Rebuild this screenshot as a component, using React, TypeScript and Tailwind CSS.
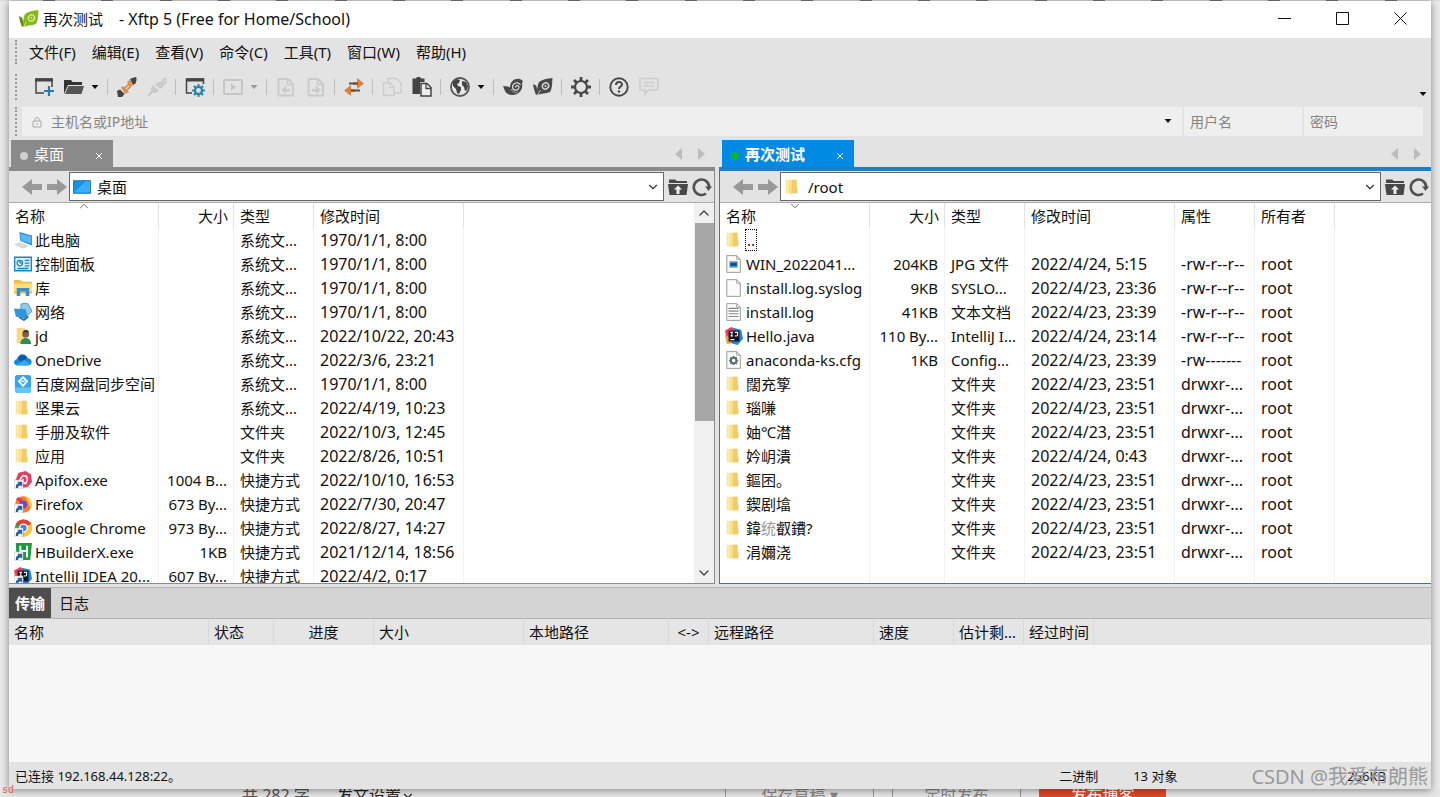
import type { ReactNode } from 'react'
import { ChevronDown, ChevronUp } from 'lucide-react'
import { clsx } from 'clsx'

interface FileRow {
  icon: ReactNode
  name: ReactNode
  cells: string[]
}

interface Column {
  label: string
  width: string
  align?: 'right' | 'center'
}

/* ---------- toolbar icons, 20x20 ---------- */

function Svg({ children, className = 'size-5' }: { children: ReactNode; className?: string }) {
  return (
    <svg viewBox="0 0 20 20" className={clsx('block shrink-0', className)} fill="none" aria-hidden="true">
      {children}
    </svg>
  )
}

const NewSessionIcon = () => (
  <Svg>
    <path d="M10 16H2V2h16v8" stroke="#444" strokeWidth="1.5" />
    <path d="M1 1.500h18v3H1z" fill="#444" />
    <path d="M15 9v10M10 14h10" stroke="#1f7fa8" strokeWidth="2.200" />
  </Svg>
)

const OpenIcon = () => (
  <Svg>
    <path d="M0 17V3h7l1.500 2H18v3H4z" fill="#333" />
    <path d="M4.500 9H20L17.500 17H1z" fill="#555" />
  </Svg>
)

const PlugIcon = () => (
  <Svg>
    <path d="M13 2c2-1 4-1.500 6-2 1 2 .5 4-.5 6.500L16 8z" fill="#444" />
    <path d="M12.500 2.500l4 5.500-3 2.500-1.500-1-1-2.500-1-1.500z" fill="#e09350" />
    <path d="M0 14l3-1.500 4.500 4.500L5 20H1z" fill="#444" />
    <path d="M4 10.500l2-1.500 6 6-4 2z" fill="#e09350" />
    <path d="M7 12l5-5M9 14l4-4" stroke="#c98245" strokeWidth="1.500" />
  </Svg>
)

const UnplugIcon = () => (
  <Svg>
    <path d="M12 5l3-1 2 2-1 4-3 2-5-5zM6 8l6 6-3 2-3 0-2-2 0-3z" fill="#cacaca" />
    <path d="M14 6l5-5M16 8l4-4M1 19l5-5" stroke="#cacaca" strokeWidth="2" />
  </Svg>
)

const gearTeeth = 'M10 1v3M10 16v3M1 10h3M16 10h3M3.600 3.600l2.200 2.200M14.200 14.200l2.200 2.200M3.600 16.400l2.200-2.200M14.200 5.800l2.200-2.200'

const PropsIcon = () => (
  <Svg>
    <path d="M7 16H1.500V2h17v5" stroke="#444" strokeWidth="1.500" />
    <path d="M1 1.500h18v3H1z" fill="#444" />
    <g transform="translate(6.500 6.500) scale(.7)">
      <circle cx="10" cy="10" r="5" stroke="#1f7fa8" strokeWidth="3" />
      <path d={gearTeeth} stroke="#1f7fa8" strokeWidth="3" />
    </g>
  </Svg>
)

const PlayIcon = () => (
  <Svg>
    <rect x="1" y="3" width="18" height="14" rx="1" stroke="#c6c6c6" strokeWidth="2" />
    <path d="M8 6.500v7l5-3.500z" fill="#c6c6c6" />
  </Svg>
)

const DocIcon = ({ flip }: { flip?: boolean }) => (
  <Svg>
    <path d="M2.500 2H12l5 5v11.500H2.500z" stroke="#cbcbcb" strokeWidth="2" />
    <path d="M11.500 2v5.500H17" stroke="#cbcbcb" strokeWidth="1.500" />
    <path d={flip ? 'M6 12h4v-3.500l5 4.500-5 4v-2.500H6z' : 'M14 12h-4v-3.500L5 13l5 4v-2.500h4z'} fill="#cbcbcb" />
  </Svg>
)

const TransferIcon = () => (
  <Svg>
    <path d="M13 1l7 5.500-7 5.500V8H9V5h4z" fill="#d9823e" />
    <path d="M7 8l-7 5.500L7 19v-4h4v-3H7z" fill="#d9823e" />
    <path d="M5 6.500h9M7 13.500h9" stroke="#555" strokeWidth="1.800" />
  </Svg>
)

const CopyIcon = () => (
  <Svg>
    <path d="M6 6V1.500h8l5 4V16h-6M1.500 6H8l4 4v8.500H1.500z" stroke="#cdcdcd" strokeWidth="1.500" />
    <path d="M7.500 6v4.500H12" stroke="#cdcdcd" />
  </Svg>
)

const PasteIcon = () => (
  <Svg>
    <path d="M.5 1.500H4L5 0h3l1 1.500h3.500V5H8v12H.5z" fill="#444" />
    <path d="M9 6.500h6l4 4V19H9z" fill="#eee" stroke="#444" strokeWidth="1.500" />
    <path d="M14 6.500v5h5" stroke="#444" strokeWidth="1.300" />
  </Svg>
)

const GlobeIcon = () => (
  <Svg>
    <circle cx="10" cy="10" r="9" fill="#e8e8e8" stroke="#555" strokeWidth="1.800" />
    <path d="M3 5l4-3 3 1-1 3-2 1 1 2 3 1v3l-2 4-2-1-1-4-3-3zM12 4l4 1 2 4-1 4-2 1-1-4-2-2z" fill="#444" />
  </Svg>
)

const ShellIcon = () => (
  <Svg>
    <path d="M0 9l5 .5 2 1C7 4 12 1 17 2l3 2-1 2c1 5-1 9-5 11-5 2-10 1-12-3z" fill="#484848" />
    <path d="M17.500 8c-2-4-8-2-8 2 0 4 6 4 6.500.5 0-2.500-3.500-2.500-3.500 0" stroke="#ddd" strokeWidth="1.200" />
    <path d="M8 12c1 3 4 4 7 3" stroke="#bbb" strokeWidth=".8" />
  </Svg>
)

const LeafIcon = ({ fill, side, light }: { fill: string; side: string; light: string }) => (
  <Svg>
    <path d="M0 7l3 1.500 2.500 8L3 18C1.500 14 .5 11 0 7z" fill={side} />
    <path d="M6 5c3-2.500 8-3.500 13.500-4C19 6 19.500 11 17 15c-4 2-9 1-12.500 3C4 13 4 9 6 5z" fill={fill} />
    <path d="M4.500 18l3-5" stroke={light} strokeWidth=".8" />
    <ellipse cx="12.500" cy="9" rx="3.300" ry="2.900" stroke={light} strokeWidth="1.400" transform="rotate(-35 12.500 9)" />
    <circle cx="12.500" cy="9" r="1" fill={light} />
  </Svg>
)

const GearIcon = () => (
  <Svg>
    <circle cx="10" cy="10" r="6" stroke="#484848" strokeWidth="2.200" />
    <path d="M10 0v4M10 16v4M0 10h4M16 10h4M3 3l2.800 2.800M14.200 14.200L17 17M3 17l2.800-2.800M14.200 5.800L17 3" stroke="#484848" strokeWidth="2.800" />
  </Svg>
)

const HelpIcon = () => (
  <Svg>
    <circle cx="10" cy="10" r="8.700" stroke="#484848" strokeWidth="1.900" />
    <path d="M7 8c0-4 6-4 6-.5 0 2-3 2-3 4.500" stroke="#484848" strokeWidth="2" />
    <circle cx="10" cy="14.500" r="1.200" fill="#484848" />
  </Svg>
)

const CommentIcon = () => (
  <Svg>
    <path d="M1 1.500h18v11.500H9.500L6 17v-4H1z" stroke="#cdcdcd" strokeWidth="1.600" />
    <path d="M4.500 5.500h11M4.500 9h11" stroke="#cdcdcd" strokeWidth="1.400" />
  </Svg>
)

const Caret = ({ muted }: { muted?: boolean }) => (
  <svg viewBox="0 0 8 5" className="block h-[5px] w-2 shrink-0" aria-hidden="true">
    <path d="M.5 0h7L4 4z" fill={muted ? '#999' : '#111'} />
  </svg>
)

/* ---------- file icons, 18px ---------- */

const icon = 'h-[18px] w-[18px]'

const Folder = () => (
  <Svg className={icon}>
    <path d="M2 2h12v15H2z" fill="#fbe08b" />
    <path d="M9 2h5v8l1 1v6H8l1-7z" fill="#f2cb66" />
    <path d="M4 2v15" stroke="#fdeeb8" strokeWidth="2" />
  </Svg>
)

const PcIcon = () => (
  <Svg className={icon}>
    <path d="M6 1l14 4v11L7 11z" fill="#2f8fd8" />
    <path d="M7 3l12 3v8L8 10.500z" fill="#58b8f3" />
    <path d="M1 15l6-2 8 4-5 2z" fill="#dcdcdc" stroke="#bbb" strokeWidth=".6" />
  </Svg>
)

const PanelIcon = () => (
  <Svg className={icon}>
    <path d="M.7 2.500h18.600v15H.7z" fill="#d5efff" stroke="#2081c2" strokeWidth="1.600" />
    <circle cx="6.500" cy="9" r="3" fill="#fff" stroke="#2081c2" strokeWidth="1.300" />
    <path d="M6.500 9V6M6.500 9h3M12 6h5M12 9h5M12 12h5M4 15h12" stroke="#2081c2" strokeWidth="1.500" />
  </Svg>
)

const LibIcon = () => (
  <Svg className={icon}>
    <path d="M0 1h7l2 2h11v13H0z" fill="#f0bd48" />
    <path d="M0 5h20v9H0z" fill="#ffdf7c" />
    <path d="M3 10h14v9h-4v-5H7v5H3z" fill="#3c8fce" />
  </Svg>
)

const NetIcon = () => (
  <Svg className={icon}>
    <path d="M8 1l7-1 5 9-6 6-7-3z" fill="#8fcbe8" stroke="#4992bb" />
    <path d="M0 6l13 1 2 8-2 3L2 15z" fill="#2e97dc" />
    <path d="M6 16l5 3 5-4" stroke="#286e9f" strokeWidth="1.800" />
  </Svg>
)

const UserIcon = () => (
  <Svg className={icon}>
    <path d="M3 1h9v17H3z" fill="#f8d97c" />
    <circle cx="13" cy="8" r="3.800" fill="#8b5c3c" />
    <path d="M7 19c0-9 12-9 12 0z" fill="#2f8c5d" />
    <path d="M9.500 6c1-4 7-4 7 0z" fill="#393b3a" />
  </Svg>
)

const CloudIcon = () => (
  <Svg className={icon}>
    <path d="M4 16c-5 0-5-6-.5-7C5 2 13 2 15 8c6 0 6 8 1 8z" fill="#1289db" />
    <path d="M4 9c2-6 9-6 11-1l-7 4z" fill="#0b5cad" />
    <path d="M2.500 15l9-5 7 5c-1 1-14 1-16 0z" fill="#31a9ee" />
  </Svg>
)

const SyncIcon = () => (
  <Svg className={icon}>
    <rect x="1" y="0" width="18" height="20" rx="3" fill="#35a5e6" />
    <path d="M1 14h18v3c0 2-1 3-3 3H4c-2 0-3-1-3-3z" fill="#64c4f5" />
    <path d="M10 2.500l4.500 4.500-4.500 5L5.500 7z" stroke="#fff" strokeWidth="2" />
    <path d="M8 7h4" stroke="#fff" strokeWidth="1.500" />
  </Svg>
)

const Shortcut = () => (
  <>
    <path d="M0 10h10v10H0z" fill="#fff" stroke="#aaa" strokeWidth=".6" />
    <path d="M2 19c0-4 1-5 3-5.500L3.500 12H9v5.500L7.500 16C5 16 4.500 17 4.500 19z" fill="#1f5fae" />
  </>
)

const ApifoxIcon = () => (
  <Svg className={icon}>
    <path d="M5 2l8-2 6 4 1 8-5 6-8 1-6-7z" fill="#e2405f" />
    <path d="M7 12V9l3-4 4 1 1 4-2 4-3-1V9" stroke="#fff" strokeWidth="1.700" />
    <Shortcut />
  </Svg>
)

const FirefoxIcon = () => (
  <Svg className={icon}>
    <circle cx="10.500" cy="10.500" r="9.200" fill="#ff7a2b" />
    <path d="M12 1c7 2 9 8 7 13-2-1-2-4-3-6z" fill="#ffd13b" />
    <path d="M2 5l3-3 1 2 4 0-3 4z" fill="#e8364b" />
    <circle cx="10" cy="10.500" r="4.500" fill="#7045c9" />
    <Shortcut />
  </Svg>
)

const ChromeIcon = () => (
  <Svg className={icon}>
    <circle cx="10.500" cy="10" r="9.500" fill="#2fa552" />
    <path d="M10.500 10L2.300 5.200A9.500 9.500 0 0 1 18.700 5.200z" fill="#e14234" />
    <path d="M10.500 10l8.200-4.800A9.500 9.500 0 0 1 10.500 19.500z" fill="#fbc92f" />
    <path d="M3 5h16" stroke="#e14234" strokeWidth="2" />
    <circle cx="10.500" cy="10" r="4.300" fill="#3f82ee" stroke="#fff" strokeWidth="1.500" />
    <Shortcut />
  </Svg>
)

const HBuilderIcon = () => (
  <Svg className={icon}>
    <path d="M2 0h18l-2 19H3z" fill="#1b9b42" />
    <path d="M7 3v13M14.500 3v13M7 9h7.500" stroke="#fff" strokeWidth="2.200" />
    <Shortcut />
  </Svg>
)

const IdeaIcon = ({ link }: { link?: boolean }) => (
  <Svg className={icon}>
    <path d="M0 4l7-4 6 3-1 14-9 1z" fill="#e8405c" />
    <path d="M10 1l8 2 2 10-6 7-7-2z" fill="#1b84e8" />
    <path d="M0 9l5 2 2 7-5 1z" fill="#f49d3c" />
    <path d="M4 4h12v12H4z" fill="#18121c" />
    <path d="M6 6h3M7.500 6v4M6 10h3M11 6h3v3c0 1-2 1.500-3 .5M6 14h4.500" stroke="#fff" strokeWidth="1.200" />
    {link && <Shortcut />}
  </Svg>
)

const Page = ({ children }: { children?: ReactNode }) => (
  <Svg className={icon}>
    <path d="M2 .7h11l4 4v14.600H2z" fill="#fbfbfb" stroke="#999" strokeWidth="1.100" />
    <path d="M13 .7v4h4" stroke="#999" />
    {children}
  </Svg>
)

/* ---------- data ---------- */

const localColumns: Column[] = [
  { label: '名称', width: 'w-[150px]' },
  { label: '大小', width: 'w-[75px]', align: 'right' },
  { label: '类型', width: 'w-20' },
  { label: '修改时间', width: 'w-[150px]' },
]

const remoteColumns: Column[] = [
  ...localColumns,
  { label: '属性', width: 'w-20' },
  { label: '所有者', width: 'w-20' },
]

const localRows: FileRow[] = [
  { icon: <PcIcon />, name: '此电脑', cells: ['', '系统文...', '1970/1/1, 8:00'] },
  { icon: <PanelIcon />, name: '控制面板', cells: ['', '系统文...', '1970/1/1, 8:00'] },
  { icon: <LibIcon />, name: '库', cells: ['', '系统文...', '1970/1/1, 8:00'] },
  { icon: <NetIcon />, name: '网络', cells: ['', '系统文...', '1970/1/1, 8:00'] },
  { icon: <UserIcon />, name: 'jd', cells: ['', '系统文...', '2022/10/22, 20:43'] },
  { icon: <CloudIcon />, name: 'OneDrive', cells: ['', '系统文...', '2022/3/6, 23:21'] },
  { icon: <SyncIcon />, name: '百度网盘同步空间', cells: ['', '系统文...', '1970/1/1, 8:00'] },
  { icon: <Folder />, name: '坚果云', cells: ['', '系统文...', '2022/4/19, 10:23'] },
  { icon: <Folder />, name: '手册及软件', cells: ['', '文件夹', '2022/10/3, 12:45'] },
  { icon: <Folder />, name: '应用', cells: ['', '文件夹', '2022/8/26, 10:51'] },
  { icon: <ApifoxIcon />, name: 'Apifox.exe', cells: ['1004 B...', '快捷方式', '2022/10/10, 16:53'] },
  { icon: <FirefoxIcon />, name: 'Firefox', cells: ['673 By...', '快捷方式', '2022/7/30, 20:47'] },
  { icon: <ChromeIcon />, name: 'Google Chrome', cells: ['973 By...', '快捷方式', '2022/8/27, 14:27'] },
  { icon: <HBuilderIcon />, name: 'HBuilderX.exe', cells: ['1KB', '快捷方式', '2021/12/14, 18:56'] },
  { icon: <IdeaIcon link />, name: 'IntelliJ IDEA 20...', cells: ['607 By...', '快捷方式', '2022/4/2, 0:17'] },
]

const dir = (name: ReactNode, date = '2022/4/23, 23:51'): FileRow => ({
  icon: <Folder />,
  name,
  cells: ['', '文件夹', date, 'drwxr-...', 'root'],
})

const remoteRows: FileRow[] = [
  {
    icon: <Folder />,
    name: <span className="-ml-px block h-[22px] w-3 border border-dotted border-black text-center leading-5">..</span>,
    cells: ['', '', '', '', ''],
  },
  {
    icon: (
      <Page>
        <path d="M5 7h9v7H5z" fill="#3f8fd2" />
        <path d="M6 9h7v3H6z" fill="#15487f" />
      </Page>
    ),
    name: 'WIN_2022041...',
    cells: ['204KB', 'JPG 文件', '2022/4/24, 5:15', '-rw-r--r--', 'root'],
  },
  { icon: <Page />, name: 'install.log.syslog', cells: ['9KB', 'SYSLO...', '2022/4/23, 23:36', '-rw-r--r--', 'root'] },
  {
    icon: <Page><path d="M4 6h11M4 9h11M4 12h11M4 15h11" stroke="#888" strokeWidth="1.200" /></Page>,
    name: 'install.log',
    cells: ['41KB', '文本文档', '2022/4/23, 23:39', '-rw-r--r--', 'root'],
  },
  { icon: <IdeaIcon />, name: 'Hello.java', cells: ['110 By...', 'IntelliJ I...', '2022/4/24, 23:14', '-rw-r--r--', 'root'] },
  {
    icon: (
      <Page>
        <g transform="translate(4 5) scale(.56)">
          <circle cx="10" cy="10" r="5.500" stroke="#5f6d75" strokeWidth="4" />
          <path d={gearTeeth} stroke="#5f6d75" strokeWidth="3.500" />
        </g>
      </Page>
    ),
    name: 'anaconda-ks.cfg',
    cells: ['1KB', 'Config...', '2022/4/23, 23:39', '-rw-------', 'root'],
  },
  dir('闊充箰'),
  dir('瑙嗛'),
  dir('妯℃澘'),
  dir('妗岄潰', '2022/4/24, 0:43'),
  dir('鏂囨。'),
  dir('鍥剧墖'),
  dir(<>鍏<span className="text-[#999]">统</span>叡鐨?</>),
  dir('涓嬭浇'),
]

const queueColumns: Column[] = [
  { label: '名称', width: 'w-[200px]' },
  { label: '状态', width: 'w-[65px]' },
  { label: '进度', width: 'w-[100px]', align: 'center' },
  { label: '大小', width: 'w-[150px]' },
  { label: '本地路径', width: 'w-[145px]' },
  { label: '<->', width: 'w-10', align: 'center' },
  { label: '远程路径', width: 'w-[165px]' },
  { label: '速度', width: 'w-20' },
  { label: '估计剩...', width: 'w-[70px]' },
  { label: '经过时间', width: 'w-[70px]' },
]

/* ---------- parts ---------- */

const Grip = () => <div className="w-0.5 shrink-0 self-stretch border-l-2 border-dotted border-[#999]" />
const Sep = () => <div className="mr-[9px] ml-2 h-4 w-px shrink-0 bg-[#bdbdbd]" />

function Tool({ label, children, disabled }: { label: string; children: ReactNode; disabled?: boolean }) {
  return (
    <button type="button" aria-label={label} disabled={disabled} className="flex shrink-0 items-center gap-[7px]">
      {children}
    </button>
  )
}

function Toolbar() {
  return (
    <div className="flex h-[34px] items-center py-1 pr-1 pl-1.5">
      <Grip />
      <div className="ml-[17px] flex items-center gap-2.5">
        <Tool label="新建"><NewSessionIcon /></Tool>
        <Tool label="打开"><OpenIcon /><Caret /></Tool>
      </div>
      <Sep />
      <div className="flex items-center gap-2.5">
        <Tool label="连接"><PlugIcon /></Tool>
        <Tool label="断开" disabled><UnplugIcon /></Tool>
      </div>
      <Sep />
      <Tool label="属性"><PropsIcon /></Tool>
      <Sep />
      <Tool label="启动" disabled><PlayIcon /><Caret muted /></Tool>
      <Sep />
      <div className="flex items-center gap-2.5">
        <Tool label="下载" disabled><DocIcon /></Tool>
        <Tool label="上传" disabled><DocIcon flip /></Tool>
      </div>
      <Sep />
      <Tool label="传输"><TransferIcon /></Tool>
      <Sep />
      <div className="flex items-center gap-2.5">
        <Tool label="复制" disabled><CopyIcon /></Tool>
        <Tool label="粘贴"><PasteIcon /></Tool>
      </div>
      <Sep />
      <Tool label="编码"><GlobeIcon /><Caret /></Tool>
      <Sep />
      <div className="flex items-center gap-2.5">
        <Tool label="Xshell"><ShellIcon /></Tool>
        <Tool label="Xftp"><LeafIcon fill="#484848" side="#484848" light="#ddd" /></Tool>
      </div>
      <Sep />
      <Tool label="选项"><GearIcon /></Tool>
      <Sep />
      <div className="flex items-center gap-2.5">
        <Tool label="帮助"><HelpIcon /></Tool>
        <Tool label="反馈" disabled><CommentIcon /></Tool>
      </div>
      <button type="button" aria-label="更多" className="mt-3.5 ml-auto"><Caret /></button>
    </div>
  )
}

const field = 'min-w-0 bg-[#efefef] text-sm leading-5 outline-none placeholder:text-[#858585]'

function AddressBar() {
  return (
    <div className="mt-[3px] flex h-[29px] pr-2 pl-1.5">
      <Grip />
      <div className="ml-[5px] flex flex-1 items-center bg-[#efefef] pr-2.5 pl-2.5">
        <svg viewBox="0 0 10 12" className="mr-[9px] h-3 w-2.5" fill="none" stroke="#aaa" aria-hidden="true">
          <path d="M1 5h8v6H1zM3 5V3c0-2 4-2 4 0v2M5 7v2" />
        </svg>
        <input aria-label="主机" placeholder="主机名或IP地址" className={clsx(field, 'flex-1')} />
        <Caret />
      </div>
      <input aria-label="用户名" placeholder="用户名" className={clsx(field, 'ml-0.5 w-[118px] px-1.5')} />
      <input aria-label="密码" placeholder="密码" type="password" className={clsx(field, 'ml-0.5 w-[119px] px-1.5')} />
    </div>
  )
}

function NavArrow({ flip }: { flip?: boolean }) {
  return (
    <svg viewBox="0 0 20 16" className={clsx('block h-4 w-5', flip && 'rotate-180')} aria-hidden="true">
      <path d="M0 8l10-8v5h10v6H10v5z" fill="#989898" />
    </svg>
  )
}

function PathBar({ path, pathIcon }: { path: string; pathIcon: ReactNode }) {
  return (
    <div className="flex h-8 shrink-0 items-center border-b border-[#aaa] bg-[#e3e3e3] pr-0.5">
      <button type="button" aria-label="后退" className="ml-[13px]"><NavArrow /></button>
      <button type="button" aria-label="前进" className="ml-[5px]"><NavArrow flip /></button>
      <div className="ml-0.5 flex h-[29px] flex-1 items-center border border-[#666] bg-white pr-[3px] pl-[3px]">
        {pathIcon}
        <select aria-label="路径" className="ml-1.5 min-w-0 flex-1 appearance-none bg-white outline-none">
          <option>{path}</option>
        </select>
        <ChevronDown className="size-3.5 text-[#333]" strokeWidth={2} />
      </div>
      <button type="button" aria-label="上一级" className="ml-1">
        <Svg>
          <path d="M1 2.500h6l2 1.500h10v2H1z" fill="#484848" />
          <path d="M0 7h20L18.500 18h-17z" fill="#484848" />
          <path d="M10 8.500l4 4h-2.500V17h-3v-4.500H6z" fill="#eee" />
        </Svg>
      </button>
      <button type="button" aria-label="刷新" className="ml-1">
        <Svg>
          <path d="M14 16.500A7.700 7.700 0 1 1 17.200 10" stroke="#505050" strokeWidth="2.600" />
          <path d="M13 9.500h7l-3.500 4.500z" fill="#505050" />
        </Svg>
      </button>
    </div>
  )
}

function FileTable({ columns, rows, sort }: { columns: Column[]; rows: FileRow[]; sort: 'up' | 'down' }) {
  const Arrow = sort === 'up' ? ChevronUp : ChevronDown
  return (
    <div className="min-w-0 flex-1 overflow-hidden">
      <table className="h-full w-full table-fixed border-separate border-spacing-0">
        <colgroup>
          {columns.map((c) => <col key={c.label} className={c.width} />)}
          <col />
        </colgroup>
        <thead>
          <tr className="h-[25px]">
            {columns.map((c, i) => (
              <th
                key={c.label}
                className={clsx('relative border-r border-[#e2e2e2] py-0 font-normal leading-6', c.align === 'right' ? 'pr-[5px] text-right' : 'pl-1.5 text-left')}
              >
                {c.label}
                {i === 0 && <Arrow className="absolute -top-1 left-1/2 size-3.5 -translate-x-1/2 text-[#555]" strokeWidth={1.5} />}
              </th>
            ))}
            <th />
          </tr>
        </thead>
        <tbody>
          {rows.map((row, i) => (
            <tr key={i} className="h-6">
              <td className="overflow-hidden border-r border-[#f3f3f3] py-0 pl-[5px]">
                <div className="flex h-6 items-center gap-[3px] whitespace-nowrap leading-6">
                  {row.icon}
                  <span>{row.name}</span>
                </div>
              </td>
              {row.cells.map((cell, j) => (
                <td
                  key={j}
                  className={clsx(
                    'overflow-hidden whitespace-nowrap border-r border-[#f3f3f3] p-0 leading-6',
                    j === 0 ? 'pr-1.5 text-right' : 'pl-1.5',
                    j > 1 && 'text-base leading-6',
                  )}
                >
                  {cell}
                </td>
              ))}
              <td />
            </tr>
          ))}
          {/* filler row keeps the column rules running to the bottom */}
          <tr>
            {columns.map((c) => <td key={c.label} className="border-r border-[#f3f3f3] p-0" />)}
            <td className="p-0" />
          </tr>
        </tbody>
      </table>
    </div>
  )
}

function Scrollbar() {
  return (
    <div className="flex w-5 shrink-0 flex-col items-center bg-[#f0f0f0]">
      <ChevronUp className="my-0.5 size-4 text-[#444]" strokeWidth={2} />
      <div className="min-h-0 w-[19px] flex-[198] bg-[#a7a7a7]" />
      <div className="min-h-0 flex-[142]" />
      <ChevronDown className="my-0.5 size-4 text-[#444]" strokeWidth={2} />
    </div>
  )
}

interface PaneProps {
  title: string
  active?: boolean
  path: string
  pathIcon: ReactNode
  children: ReactNode
}

function Pane({ title, active, path, pathIcon, children }: PaneProps) {
  return (
    <section className="flex min-h-0 min-w-0 flex-col">
      <div className={clsx('flex h-[31px] shrink-0 items-stretch border-b-4 pl-0.5', active ? 'border-[#1883cc]' : 'border-[#8a8a8a]')}>
        <div className={clsx('flex items-center pl-[9px] text-white', active ? 'ml-px w-[132px] bg-[#008ae6]' : 'w-[102px] bg-[#8a8a8a]')}>
          <span className={clsx('mt-1 size-2 rounded-full', active ? 'bg-[#09b43a]' : 'bg-[#cfcfcf]')} />
          <span className={clsx('ml-1.5', active && 'font-bold')}>{title}</span>
          <button type="button" aria-label="关闭标签" className="mr-2.5 ml-auto pt-1">
            <svg viewBox="0 0 8 8" className="size-2" stroke="#fff" aria-hidden="true"><path d="M1 1l6 6M7 1L1 7" /></svg>
          </button>
        </div>
        <div className="mr-2.5 ml-auto flex items-center gap-3.5">
          <svg viewBox="0 0 8 12" className="h-3 w-2" aria-hidden="true"><path d="M7 0v12L0 6z" fill="#bdbdbd" /></svg>
          <svg viewBox="0 0 8 12" className="h-3 w-2" aria-hidden="true"><path d="M1 0v12l7-6z" fill="#bdbdbd" /></svg>
        </div>
      </div>
      <div className={clsx('flex min-h-0 flex-1 flex-col border-b', active ? 'border-l border-[#1883cc]' : 'border-r border-[#8a8a8a]')}>
        <PathBar path={path} pathIcon={pathIcon} />
        <div className="flex min-h-0 flex-1 overflow-hidden bg-white">{children}</div>
      </div>
    </section>
  )
}

const DesktopIcon = () => (
  <Svg className={icon}>
    <path d="M.5 3h19v14H.5z" fill="#1692e8" stroke="#176da9" />
    <path d="M1 16L14 3.500h5v12.500z" fill="#39aef5" />
  </Svg>
)

const menus = ['文件(F)', '编辑(E)', '查看(V)', '命令(C)', '工具(T)', '窗口(W)', '帮助(H)']

export default function App() {
  return (
    <div className="relative flex h-screen flex-col overflow-hidden bg-[#eaeaea] font-['Noto_Sans','Noto_Sans_CJK_SC',sans-serif] text-[15px] leading-6 text-[#111]">
      <div className="flex h-px shrink-0 justify-around bg-[#ddd] px-5">
        {Array.from({ length: 24 }, (_, i) => <span key={i} className="w-3 bg-[#777]" />)}
      </div>

      <main className="z-10 mx-[9px] flex min-h-0 flex-1 flex-col bg-[#e3e3e3] shadow-[0_1px_8px_rgba(0,0,0,0.45)]">
        <header className="flex h-[37px] shrink-0 items-center bg-white pb-0.5 pl-2.5">
          <LeafIcon fill="#86b81c" side="#5f8f12" light="#d6ee8b" />
          <h1 className="ml-1 whitespace-pre">再次测试</h1>
          <span className="ml-4 text-base">- Xftp 5 (Free for Home/School)</span>
          <div className="mr-6 ml-auto flex items-center gap-[45px]">
            <button type="button" aria-label="最小化"><svg viewBox="0 0 13 13" className="block size-[13px]" stroke="#111"><path d="M0 6.500h13" /></svg></button>
            <button type="button" aria-label="最大化"><svg viewBox="0 0 13 13" className="block size-[13px]" stroke="#111" fill="none"><path d="M.5.5h12v12H.5z" /></svg></button>
            <button type="button" aria-label="关闭"><svg viewBox="0 0 13 13" className="block size-[13px]" stroke="#111"><path d="M.5.5l12 12M12.500.5l-12 12" /></svg></button>
          </div>
        </header>

        <nav className="flex h-8 shrink-0 items-center pt-0.5 pb-1.5 pl-1.5">
          <Grip />
          <div className="ml-3 flex gap-4">
            {menus.map((m) => <button type="button" key={m}>{m}</button>)}
          </div>
        </nav>
        <Toolbar />
        <AddressBar />

        <div className="mt-1 grid min-h-0 flex-1 grid-cols-[706fr_712fr] grid-rows-[minmax(0,1fr)] gap-1">
          <Pane title="桌面" path="桌面" pathIcon={<DesktopIcon />}>
            <FileTable columns={localColumns} rows={localRows} sort="up" />
            <Scrollbar />
          </Pane>
          <Pane title="再次测试" active path="/root" pathIcon={<Folder />}>
            <FileTable columns={remoteColumns} rows={remoteRows} sort="down" />
          </Pane>
        </div>

        <section className="mt-[3px] shrink-0">
          <div className="flex h-8 items-stretch border-y border-[#b5b5b5] bg-[#d4d4d4]">
            <button type="button" className="bg-[#4d4d4d] px-1.5 font-bold text-white">传输</button>
            <button type="button" className="px-2">日志</button>
          </div>
          <div className="h-[143px] bg-[#f7f7f7]">
            <table className="w-full table-fixed border-separate border-spacing-0 bg-[#e5e5e5]">
              <colgroup>
                {queueColumns.map((c) => <col key={c.label} className={c.width} />)}
                <col />
              </colgroup>
              <thead>
                <tr className="h-[26px]">
                  {queueColumns.map((c) => (
                    <th
                      key={c.label}
                      className={clsx('whitespace-nowrap border-r border-[#dadada] py-0 font-normal', c.align === 'center' ? 'px-0 text-center' : 'pr-0 pl-[5px] text-left')}
                    >
                      {c.label}
                    </th>
                  ))}
                  <th />
                </tr>
              </thead>
            </table>
          </div>
        </section>

        <footer className="flex h-[27px] shrink-0 items-center pl-1.5 text-[13px]">
          <span>已连接 192.168.44.128:22。</span>
          <div className="mr-[45px] ml-auto flex">
            <span className="w-[74px]">二进制</span>
            <span className="w-[214px]">13 对象</span>
            <span>256KB</span>
          </div>
        </footer>
      </main>

      {/* editor page that shows under the window */}
      <div className="flex h-2 shrink-0 items-start overflow-hidden bg-[#e6e6e6] pl-[242px] text-base leading-3 text-[#555]">
        <span className="w-[95px]">共 282 字</span>
        <span className="flex text-[#222]">发文设置<ChevronDown className="size-3.5" /></span>
        <div className="mr-[274px] ml-auto flex">
          <span className="mr-[18px] w-[149px] border-x border-[#999] text-center text-[#888]">保存草稿 ▾</span>
          <span className="mr-[18px] w-[129px] border-x border-[#999] text-center text-[#888]">定时发布</span>
          <span className="w-[127px] bg-[#e04a28] text-center text-white">发布博客</span>
        </div>
      </div>
      <span className="absolute bottom-0 left-0.5 z-20 font-['Liberation_Mono',monospace] text-[10px] leading-3 text-[#e06060]">sd</span>
      <span className="absolute right-3 bottom-2 z-20 text-xl leading-6 text-[#999]">CSDN @我爱布朗熊</span>
    </div>
  )
}
